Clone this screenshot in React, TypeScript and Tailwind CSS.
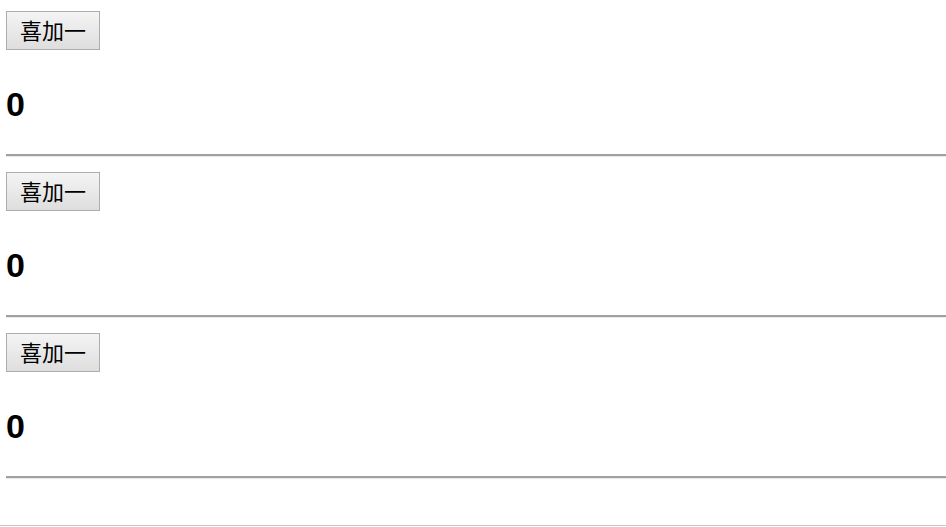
import { useState } from "react"

function Counter() {
  const [count, setCount] = useState(0)

  return (
    <div className="flex flex-col items-start">
      <button
        onClick={() => setCount(count + 1)}
        className="h-[39px] w-[94px] border border-[#adadad] bg-gradient-to-b from-[#f4f4f4] to-[#dedede] pt-[3px] text-[22px] leading-none text-black font-['Liberation_Sans','Noto_Sans_CJK_SC',sans-serif]"
      >
        喜加一
      </button>
      <h1 className="mt-[37px] text-[34px] font-bold leading-none text-black font-['Liberation_Sans',sans-serif]">
        {count}
      </h1>
      <hr className="mt-[33px] w-full border-t-2 border-[#a0a0a0] border-b border-b-[#e8e8e8]" />
    </div>
  )
}

export default function App() {
  return (
    <div className="relative h-[527px] w-[946px] overflow-hidden bg-white">
      <div className="flex flex-col gap-[15px] pl-[6px] pt-[11px]">
        <Counter />
        <Counter />
        <Counter />
      </div>
      <div className="absolute bottom-[1px] left-0 right-0 h-px bg-[#c8c8c8]" />
    </div>
  )
}
